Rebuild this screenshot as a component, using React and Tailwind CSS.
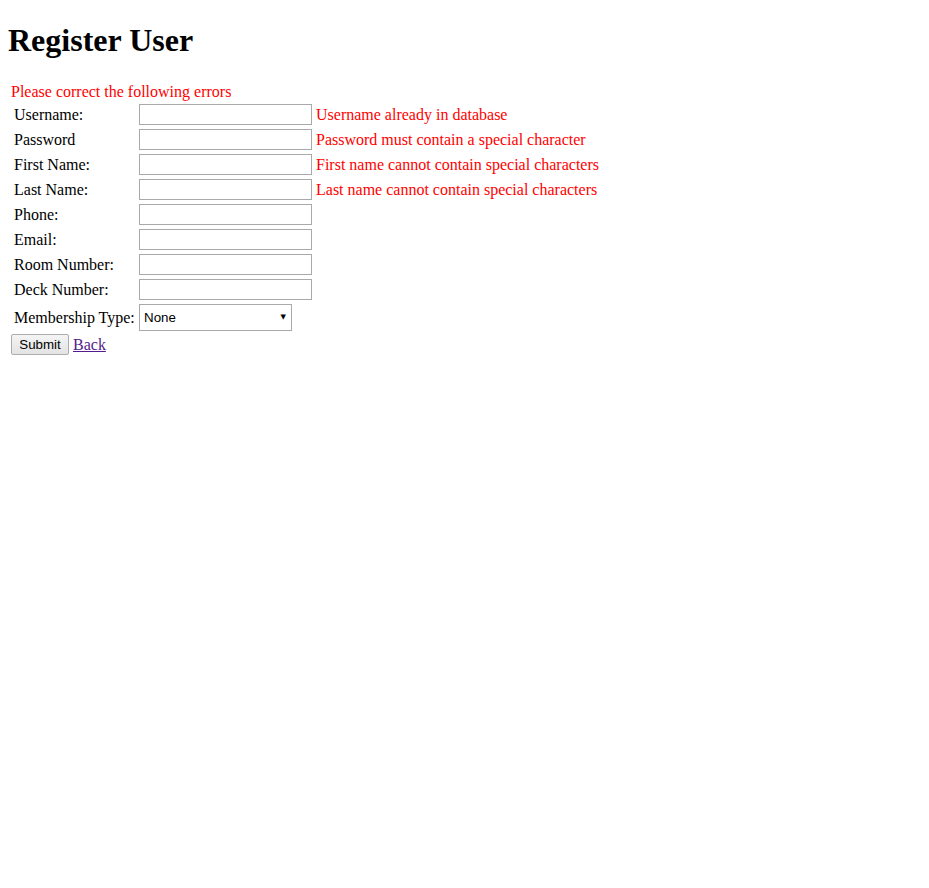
const fields = [
  { label: "Username:", error: "Username already in database" },
  { label: "Password", error: "Password must contain a special character" },
  { label: "First Name:", error: "First name cannot contain special characters" },
  { label: "Last Name:", error: "Last name cannot contain special characters" },
  { label: "Phone:" },
  { label: "Email:" },
  { label: "Room Number:" },
  { label: "Deck Number:" },
];

export default function App() {
  return (
    <div className="min-h-screen bg-white p-2 font-['Liberation_Serif',serif] text-base text-black">
      <h1 className="mt-[14px] mb-[24px] text-[32px] font-bold leading-[37px]">Register User</h1>

      <form onSubmit={(e) => e.preventDefault()}>
        <div className="ml-[3px] leading-[18px] text-[#ff0000]">Please correct the following errors</div>

        <table className="ml-[3px] border-separate border-spacing-[2px]">
          <tbody>
            {fields.map((f) => (
              <tr key={f.label}>
                <td className="w-[123px] p-px align-middle leading-[18px]">{f.label}</td>
                <td className="p-px align-middle">
                  <input
                    type="text"
                    className="block h-[21px] w-[173px] border border-[#a9a9a9] bg-white px-[2px] font-['Liberation_Sans',sans-serif] text-[13px] outline-none"
                  />
                </td>
                <td className="p-px align-middle leading-[18px] text-[#ff0000]">{f.error || ""}</td>
              </tr>
            ))}
            <tr>
              <td className="w-[123px] p-px align-middle leading-[18px]">Membership Type:</td>
              <td className="p-px align-middle">
                <div className="relative w-[153px]">
                  <select className="block h-[27px] w-[153px] appearance-none rounded-none border border-[#a9a9a9] bg-white pl-[4px] font-['Liberation_Sans',sans-serif] text-[13.33px] outline-none">
                    <option>None</option>
                    <option>Silver</option>
                    <option>Gold</option>
                  </select>
                  <span className="pointer-events-none absolute right-[6px] top-[10px] font-['DejaVu_Sans',sans-serif] text-[7px] leading-none">▼</span>
                </div>
              </td>
              <td className="p-px"></td>
            </tr>
          </tbody>
        </table>

        <div className="ml-[3px] flex items-center gap-[4px]">
          <button
            type="submit"
            className="h-[21px] w-[58px] rounded-[2px] border border-[#adadad] bg-gradient-to-b from-[#f4f4f4] to-[#e3e3e3] font-['Liberation_Sans',sans-serif] text-[13.33px] leading-none text-black"
          >
            Submit
          </button>
          <a href="#" className="leading-[18px] text-[#551a8b] underline">Back</a>
        </div>
      </form>
    </div>
  );
}
